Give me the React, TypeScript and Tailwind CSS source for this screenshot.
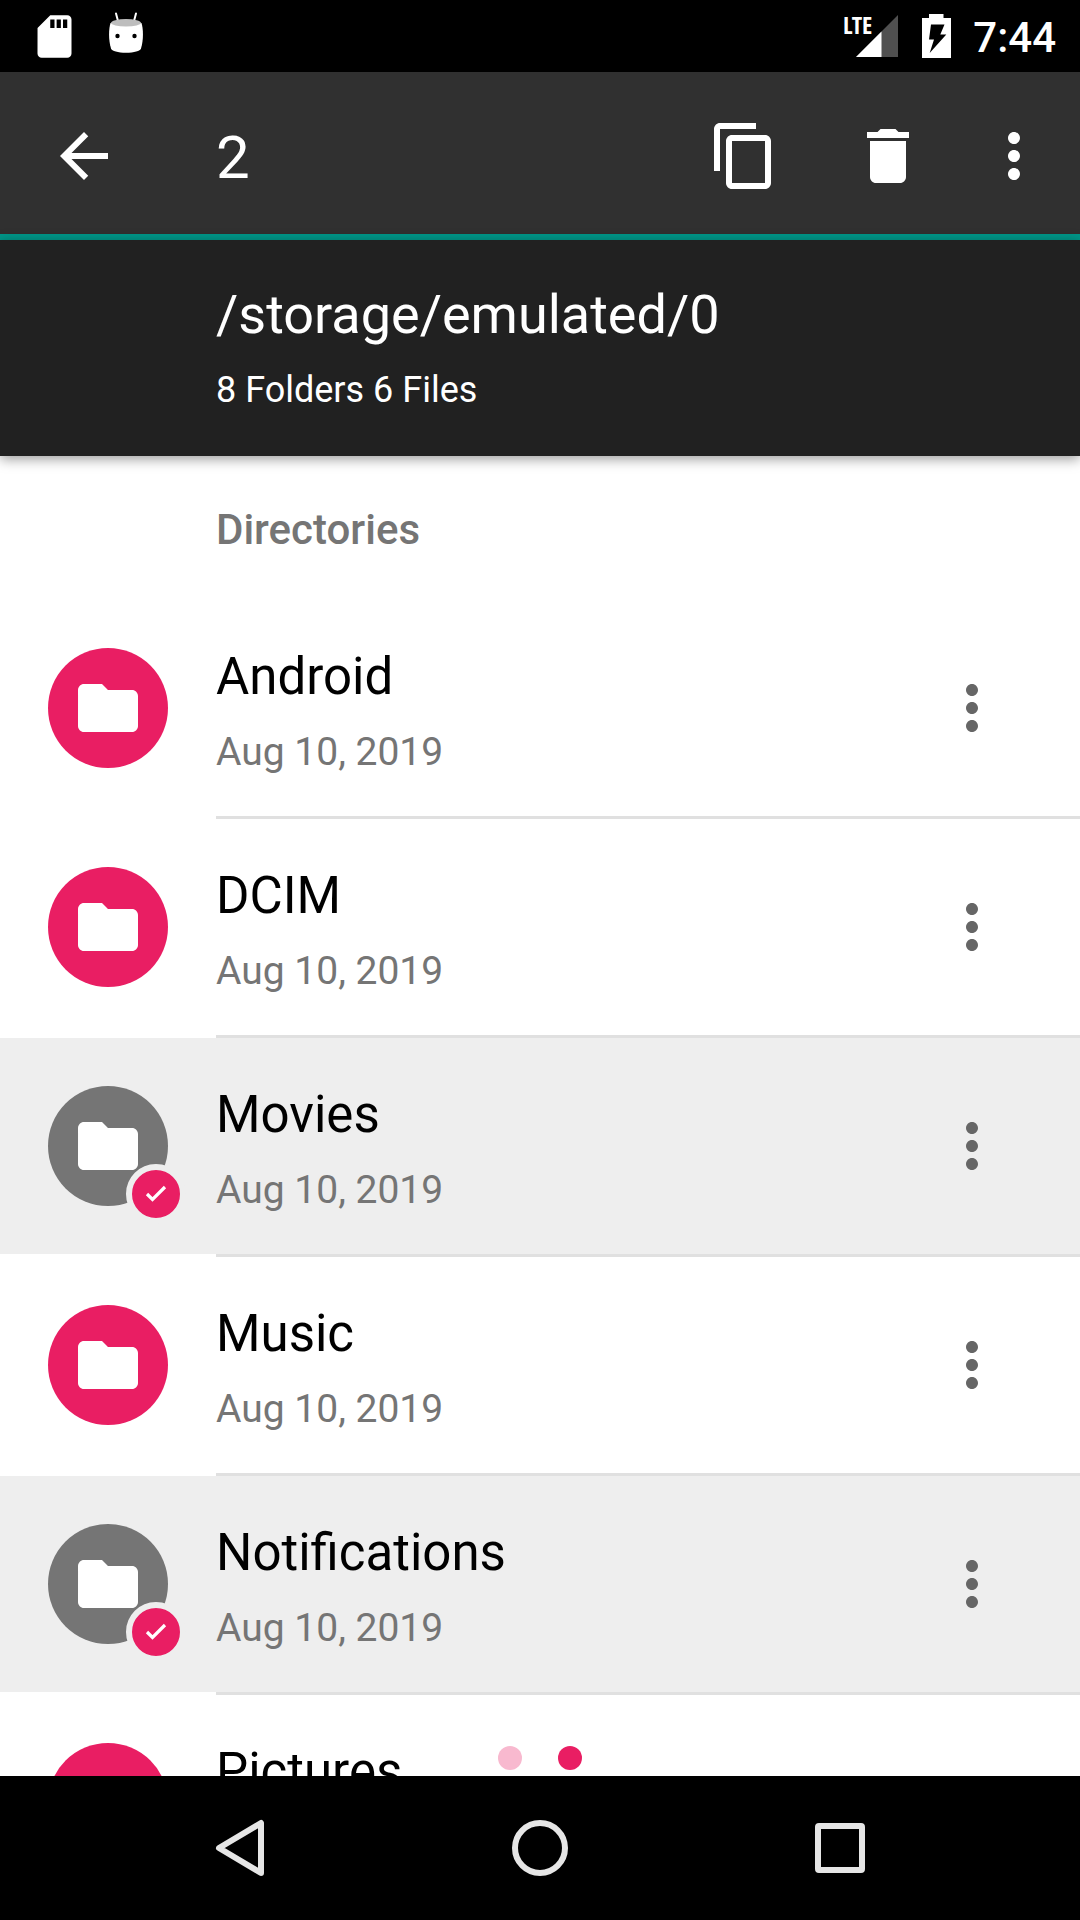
import React, { useState } from "react";

const entries = [
  { name: "Android", date: "Aug 10, 2019", selected: false },
  { name: "DCIM", date: "Aug 10, 2019", selected: false },
  { name: "Movies", date: "Aug 10, 2019", selected: true },
  { name: "Music", date: "Aug 10, 2019", selected: false },
  { name: "Notifications", date: "Aug 10, 2019", selected: true },
  { name: "Pictures", date: "Aug 10, 2019", selected: false },
];

function Icon({ d, className = "size-[72px]" }: { d: string; className?: string }) {
  return (
    <svg viewBox="0 0 24 24" className={className} fill="currentColor" aria-hidden="true">
      <path d={d} />
    </svg>
  );
}

const BACK = "M20 11H7.83l5.59-5.59L12 4l-8 8 8 8 1.41-1.41L7.83 13H20v-2z";
const COPY =
  "M16 1H4c-1.1 0-2 .9-2 2v14h2V3h12V1zm3 4H8c-1.1 0-2 .9-2 2v14c0 1.1.9 2 2 2h11c1.1 0 2-.9 2-2V7c0-1.1-.9-2-2-2zm0 16H8V7h11v14z";
const TRASH = "M6 19c0 1.1.9 2 2 2h8c1.1 0 2-.9 2-2V7H6v12zM19 4h-3.5l-1-1h-5l-1 1H5v2h14V4z";
const MORE =
  "M12 8c1.1 0 2-.9 2-2s-.9-2-2-2-2 .9-2 2 .9 2 2 2zm0 2c-1.1 0-2 .9-2 2s.9 2 2 2 2-.9 2-2-.9-2-2-2zm0 6c-1.1 0-2 .9-2 2s.9 2 2 2 2-.9 2-2-.9-2-2-2z";
const FOLDER =
  "M10 4H4c-1.1 0-1.99.9-1.99 2L2 18c0 1.1.9 2 2 2h16c1.1 0 2-.9 2-2V8c0-1.1-.9-2-2-2h-8l-2-2z";
const SD_CARD =
  "M18 2h-8L4.02 8 4 20c0 1.1.9 2 2 2h12c1.1 0 2-.9 2-2V4c0-1.1-.9-2-2-2zm-6 6h-2V4h2v4zm3 0h-2V4h2v4zm3 0h-2V4h2v4z";

function StatusBar() {
  return (
    <div className="flex h-[72px] shrink-0 items-center bg-black pr-6 pl-[18px] text-white">
      <div className="flex w-[72px] justify-center">
        <Icon d={SD_CARD} className="size-[51px]" />
      </div>
      <div className="flex w-[72px] justify-center">
        <svg viewBox="0 0 36 48" className="h-12 w-9" aria-hidden="true">
          <path d="M8 1.5 10 9M28 1.5 26 9" stroke="#fff" strokeWidth="2" strokeLinecap="round" />
          <path
            d="M2.5 11C.6 17 .4 28 3 36.500c.8 2.600 7 4.200 15 4.200s14.200-1.600 15-4.200c2.600-8.500 2.400-19.500.5-25.500z"
            fill="#fff"
          />
          <ellipse cx="18" cy="10.800" rx="15" ry="3.700" fill="#bdbdbd" />
          <circle cx="9.500" cy="24" r="2.200" />
          <circle cx="26.500" cy="24" r="2.200" />
        </svg>
      </div>
      <div className="ml-auto flex items-center">
        <div className="relative mr-6">
          <svg viewBox="0 0 42 42" className="size-[42px]" aria-hidden="true">
            <path d="M42 0V42H0z" fill="#505050" />
            <path d="M25.500 16.500V42H0z" fill="#fff" />
          </svg>
          <span className="absolute -top-1 right-[26px] font-['Open_Sans_Condensed','Open_Sans',sans-serif] text-2xl leading-7 font-bold">
            LTE
          </span>
        </div>
        <svg viewBox="0 0 29 44" className="mr-[22px] h-11 w-[29px]" aria-hidden="true">
          <path d="M7 0H21.500V4H29V44H0V4H7z" fill="#fff" />
          <path d="M9 10.500H22.500L18.300 20.500H24.300L7.700 39L12 25.500H7z" fill="#000" />
        </svg>
        <time className="pt-1 text-[42px] leading-12 font-medium">7:44</time>
      </div>
    </div>
  );
}

function Toolbar({ count }: { count: number }) {
  return (
    <div className="flex h-[168px] shrink-0 items-center border-b-6 border-[#009688] bg-[#303030] pt-1.5 pr-3 text-white">
      <button aria-label="Back" className="flex w-[168px] justify-center">
        <Icon d={BACK} />
      </button>
      <h1 className="flex-1 pt-1 pl-12 text-[60px] leading-[70px]">{count}</h1>
      <button aria-label="Copy" className="flex w-36 justify-center">
        <Icon d={COPY} />
      </button>
      <button aria-label="Delete" className="flex w-36 justify-center">
        <Icon d={TRASH} />
      </button>
      <button aria-label="More options" className="flex w-[108px] justify-center">
        <Icon d={MORE} />
      </button>
    </div>
  );
}

function PathHeader() {
  return (
    <div className="relative z-10 shrink-0 bg-[#212121] pt-[43px] pb-[45px] pl-[216px] text-white shadow-[0_3px_12px_rgba(0,0,0,0.4)]">
      <h2 className="text-[54px] leading-16">/storage/emulated/0</h2>
      <p className="mt-[22px] text-4xl leading-[42px]">8 Folders 6 Files</p>
    </div>
  );
}

function Avatar({ name, selected, onToggle }: { name: string; selected: boolean; onToggle: () => void }) {
  return (
    <button
      aria-label={"Select " + name}
      aria-pressed={selected}
      onClick={onToggle}
      className={
        "relative flex size-[120px] shrink-0 items-center justify-center rounded-full text-white " +
        (selected ? "bg-[#757575]" : "bg-[#e91e63]")
      }
    >
      <Icon d={FOLDER} />
      {selected && (
        <span className="absolute -right-[18px] -bottom-[18px] flex size-[60px] items-center justify-center rounded-full border-6 border-[#eeeeee] bg-[#e91e63]">
          <svg viewBox="0 0 24 24" className="size-6" fill="none" stroke="#fff" strokeWidth="3.200" aria-hidden="true">
            <path d="M3 12 8.500 17.500 21 5" />
          </svg>
        </span>
      )}
    </button>
  );
}

export default function App() {
  const [items, setItems] = useState(entries);
  const toggle = (name: string) =>
    setItems(items.map((i) => (i.name === name ? { ...i, selected: !i.selected } : i)));

  return (
    <div className="flex h-screen flex-col overflow-hidden bg-white font-[Roboto,sans-serif]">
      <StatusBar />
      <Toolbar count={items.filter((i) => i.selected).length} />
      <PathHeader />
      <main className="relative min-h-0 flex-1">
        <div className="h-full overflow-y-auto [scrollbar-width:none]">
          <h3 className="pt-[50px] pb-[46px] pl-[216px] text-[42px] leading-12 font-medium text-[#757575]">Directories</h3>
          <ul>
            {items.map((item) => (
              <li key={item.name}>
                <div className={"flex h-[216px] items-start pt-12 pr-9 pl-12 " + (item.selected ? "bg-[#eeeeee]" : "")}>
                  <Avatar name={item.name} selected={item.selected} onToggle={() => toggle(item.name)} />
                  <div className="min-w-0 flex-1 pl-12">
                    <p className="text-[51px] leading-[58px] text-black">{item.name}</p>
                    <p className="mt-[22px] text-[39px] leading-12 text-[#757575]">{item.date}</p>
                  </div>
                  <button
                    aria-label={"More options for " + item.name}
                    className="flex h-[120px] w-36 items-center justify-center text-[#666666]"
                  >
                    <Icon d={MORE} />
                  </button>
                </div>
                <div className="ml-[216px] h-[3px] bg-[#e0e0e0]" />
              </li>
            ))}
          </ul>
        </div>
        <div className="absolute inset-x-0 bottom-1.5 flex justify-center gap-9">
          <span className="size-6 rounded-full bg-[#f8b9cf]" />
          <span className="size-6 rounded-full bg-[#e91e63]" />
        </div>
      </main>
      <nav className="flex h-36 shrink-0 items-center justify-center bg-black text-[#e6e6e6]">
        <button aria-label="Back" className="flex w-[300px] justify-center">
          <svg viewBox="0 0 60 60" className="size-[60px]" fill="none" stroke="currentColor" strokeWidth="6" strokeLinejoin="round" aria-hidden="true">
            <path d="M51 5V55L9 30z" />
          </svg>
        </button>
        <button aria-label="Home" className="flex w-[300px] justify-center">
          <svg viewBox="0 0 60 60" className="size-[60px]" fill="none" stroke="currentColor" strokeWidth="6" aria-hidden="true">
            <circle cx="30" cy="30" r="25" />
          </svg>
        </button>
        <button aria-label="Recent apps" className="flex w-[300px] justify-center">
          <svg viewBox="0 0 60 60" className="size-[60px]" fill="none" stroke="currentColor" strokeWidth="6" strokeLinejoin="round" aria-hidden="true">
            <rect x="8" y="8" width="44" height="44" rx="1" />
          </svg>
        </button>
      </nav>
    </div>
  );
}
